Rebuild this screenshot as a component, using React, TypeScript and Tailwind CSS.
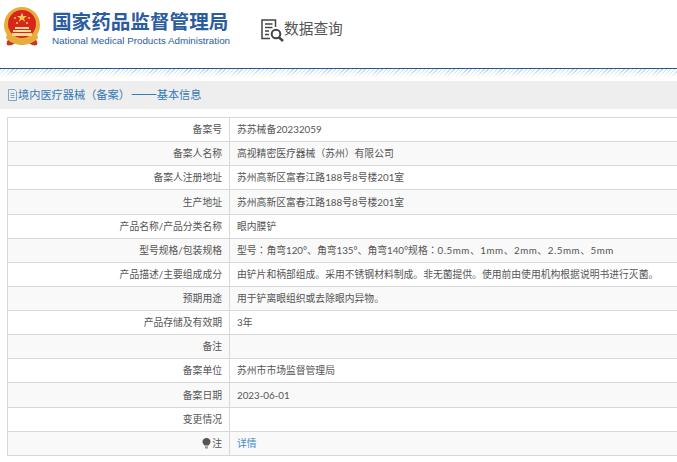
const rows: [string, React.ReactNode][] = [
  ["备案号", "苏苏械备20232059"],
  ["备案人名称", <>高视精密医疗器械<span className="font-['Noto_Sans_CJK_TC',sans-serif]">（</span>苏州<span className="font-['Noto_Sans_CJK_TC',sans-serif]">）</span>有限公司</>],
  ["备案人注册地址", "苏州高新区富春江路188号8号楼201室"],
  ["生产地址", "苏州高新区富春江路188号8号楼201室"],
  ["产品名称/产品分类名称", "眼内膜铲"],
  ["型号规格/包装规格", <>型号<span className="font-['Noto_Sans_CJK_TC',sans-serif]">：</span>角弯120°、角弯135°、角弯140°规格<span className="font-['Noto_Sans_CJK_TC',sans-serif]">：</span><span className="tracking-[0.53px]">0.5mm、1mm、2mm、2.5mm、5mm</span></>],
  ["产品描述/主要组成成分", "由铲片和柄部组成。采用不锈钢材料制成。非无菌提供。使用前由使用机构根据说明书进行灭菌。"],
  ["预期用途", "用于铲离眼组织或去除眼内异物。"],
  ["产品存储及有效期", "3年"],
  ["备注", ""],
  ["备案单位", "苏州市市场监督管理局"],
  ["备案日期", "2023-06-01"],
  ["变更情况", ""],
];

const Emblem = () => (
  <svg width="36" height="40" viewBox="0 0 36 40" className="shrink-0">
    <path d="M6 31c-3 2-4 5-3 7 3 1 6 0 8-2l7 2 7-2c2 2 5 3 8 2 1-2 0-5-3-7z" fill="#c9342b" />
    <circle cx="18" cy="18" r="18" fill="#e6ac3c" />
    <circle cx="18" cy="17" r="14" fill="#d8261c" />
    <path d="M18 5.500l1.300 3.500h3.700l-3 2.200 1.100 3.500-3.100-2.100-3.100 2.100 1.100-3.500-3-2.200h3.700z" fill="#f3cb50" />
    <circle cx="11" cy="11" r="1" fill="#f3cb50" />
    <circle cx="13" cy="16" r="1" fill="#f3cb50" />
    <circle cx="23" cy="16" r="1" fill="#f3cb50" />
    <circle cx="25" cy="11" r="1" fill="#f3cb50" />
    <path d="M11 20h14v2H11zM9 23h18v2H9zM8 26h20v3H8z" fill="#f6dd97" />
    <path d="M3 27c3 5 9 8 15 8s12-3 15-8l1 4c-3 4-10 7-16 7S5 35 2 31z" fill="#e6ac3c" />
  </svg>
);

const SearchDoc = () => (
  <svg width="23" height="23" viewBox="0 0 23 23" fill="none" stroke="#444" className="shrink-0">
    <path d="M14.500 8V1H1v18.500h8" strokeWidth="1.500" />
    <path d="M4 5h7.500M4 8.500h7.500M4 12h4M4 15.500h4" strokeWidth="1.300" />
    <circle cx="15" cy="15" r="4.300" strokeWidth="2" />
    <path d="M18 18.500l4 3.500" strokeWidth="2.400" />
  </svg>
);

const Bulb = () => (
  <svg width="9" height="11" viewBox="0 0 9 11" className="shrink-0">
    <path d="M4.500 0C2 0 .5 1.800.5 3.800c0 1.700 1.200 2.700 2 3.700h4c.8-1 2-2 2-3.700C8.500 1.800 7 0 4.500 0z" fill="#555" />
    <path d="M3 8.300h3V10.500H3z" fill="#999" />
  </svg>
);

const DocIcon = () => (
  <svg width="10" height="12" viewBox="0 0 10 12" fill="none" stroke="#5b93c4" className="shrink-0">
    <path d="M.5.500h6l2 2v9h-8zM2.500 4.500h4M2.500 6.500h4M2.500 8.500h4" strokeWidth="0.800" />
  </svg>
);

const Row = ({ label, value, shaded, children }: { label: React.ReactNode; value?: React.ReactNode; shaded: boolean; children?: React.ReactNode }) => (
  <div className={`flex h-[24.14px] border-b border-[#d8d8d8] ${shaded ? "bg-[#f9f9f9]" : "bg-white"}`}>
    <div className="flex w-[222px] shrink-0 items-center justify-end gap-px border-r border-[#d8d8d8] pr-[7px] text-[9.800px] text-[#555]">{label}</div>
    <div className="flex flex-1 items-center whitespace-pre pl-[7px] text-[9.800px] text-[#555]">{children ?? <span>{value}</span>}</div>
  </div>
);

export default function App() {
  return (
    <div className="h-[462px] w-[677px] overflow-hidden bg-white font-['Lato','Noto_Sans_CJK_SC',sans-serif]">
      <div className="flex h-[68px] items-start">
        <div className="ml-[4px] mt-[7px]"><Emblem /></div>
        <div className="ml-[12px] mt-[10px] w-[178px]">
          <div className="whitespace-nowrap text-[19.600px] font-bold leading-[24px] text-[#2b5c9e]">国家药品监督管理局</div>
          <div className="mt-px whitespace-nowrap font-['Liberation_Sans',sans-serif] text-[9.800px] leading-[12px] text-[#2b5c9e]">National Medical Products Administration</div>
        </div>
        <div className="ml-[31px] mt-[18px] flex items-center gap-0">
          <SearchDoc />
          <span className="mb-[4px] whitespace-nowrap text-[14.700px] leading-[20px] text-[#555]">数据查询</span>
        </div>
      </div>
      <div className="h-[13px] border-t border-[#22598f] bg-[linear-gradient(to_bottom,transparent_10%,#fff_70%),repeating-linear-gradient(135deg,#bcd8ee_0px,#bcd8ee_1px,#fff_1px,#fff_3px)]" />
      <div className="flex h-[28px] items-center bg-[#eee] pl-[8px] text-[11.200px] leading-[16px] text-[#337ab7]">
        <DocIcon />
        <span className="mb-[3px] whitespace-nowrap">境内医疗器械<span className="font-['Noto_Sans_CJK_TC',sans-serif]">（</span>备案<span className="font-['Noto_Sans_CJK_TC',sans-serif]">）</span><span className="ml-px font-['Noto_Sans_CJK_SC',sans-serif] text-[15.400px]">——</span>基本信息</span>
      </div>
      <div className="ml-[7px] mt-[8px] border-t border-l border-[#d8d8d8]">
        {rows.map(([label, value], i) => (
          <Row key={String(label)} label={label} value={value} shaded={i % 2 === 1} />
        ))}
        <Row shaded={true} label={<><Bulb /><span>注</span></>}>
          <span className="text-[#428bca]">详情</span>
        </Row>
      </div>
    </div>
  );
}
